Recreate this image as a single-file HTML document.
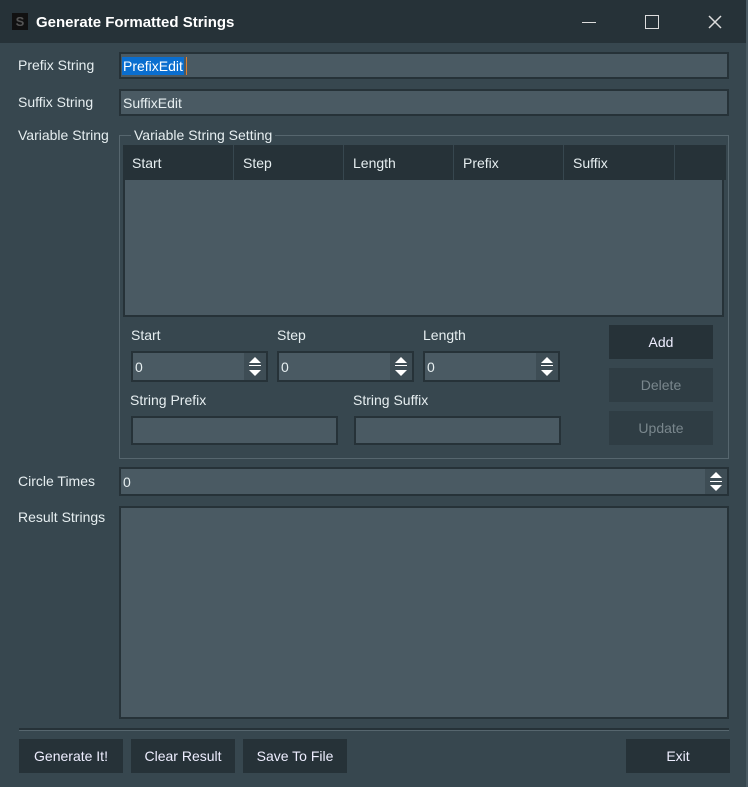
<!DOCTYPE html>
<html><head><meta charset="utf-8"><style>
*{box-sizing:border-box;margin:0;padding:0}
body{width:748px;height:787px;background:#37474f;font-family:"Liberation Sans","DejaVu Sans",sans-serif;font-size:14px;color:#e6eef0;position:relative;overflow:hidden}
.a{position:absolute}
.tb{left:0;top:0;width:748px;height:43px;background:#263238}
.in{position:absolute;background:#4a5a63;border:2px solid #263238;}
.lbl{position:absolute;line-height:16px;white-space:nowrap}
.btn{position:absolute;background:#263238;text-align:center;line-height:34px;color:#eef}
.dis{background:#2f3d44;color:#7a878d}
.sp{position:absolute;right:0;top:0;bottom:0;width:22px;background:#3e4d55}
.up{position:absolute;left:5px;top:4px;border-left:6px solid transparent;border-right:6px solid transparent;border-bottom:6px solid #fff}
.dn{position:absolute;left:5px;bottom:4px;border-left:6px solid transparent;border-right:6px solid transparent;border-top:6px solid #fff}
.ln{position:absolute;left:5px;width:12px;height:1px;background:#fff}
.th{position:absolute;top:0;height:35px;border-right:1px solid #37474f;line-height:37px;padding-left:9px}
</style></head><body>
<div class="a tb"></div>
<div class="a" style="left:12px;top:13px;width:16px;height:17px;background:#111;color:#555;font-size:13px;line-height:17px;text-align:center;font-weight:bold">S</div>
<div class="lbl" style="left:36px;top:15px;font-size:15px;font-weight:bold;color:#fff">Generate Formatted Strings</div>
<div class="a" style="left:582px;top:22px;width:14px;height:1px;background:#ddd"></div>
<div class="a" style="left:645px;top:15px;width:14px;height:14px;border:1.5px solid #ddd"></div>
<svg class="a" style="left:708px;top:15px" width="14" height="14"><path d="M1 1L13 13M13 1L1 13" stroke="#ddd" stroke-width="1.5"/></svg>
<div class="a" style="left:746px;top:0;width:2px;height:787px;background:#4a5a63"></div>

<div class="lbl" style="left:18px;top:57px">Prefix String</div>
<div class="in" style="left:119px;top:52px;width:610px;height:27px"><span style="position:absolute;left:1px;top:3px;background:#0a6ecf;color:#fff;line-height:18px;padding:0 1px">PrefixEdit</span><span style="position:absolute;left:65px;top:3px;width:1px;height:18px;background:#e08030"></span></div>
<div class="lbl" style="left:18px;top:94px">Suffix String</div>
<div class="in" style="left:119px;top:89px;width:610px;height:27px"><span style="position:absolute;left:2px;top:4px">SuffixEdit</span></div>
<div class="lbl" style="left:18px;top:127px">Variable String</div>

<div class="a" style="left:119px;top:135px;width:610px;height:324px;border:1px solid #56666e"></div>
<div class="lbl" style="left:131px;top:127px;background:#37474f;padding:0 3px">Variable String Setting</div>
<div class="a" style="left:123px;top:145px;width:601px;height:172px;background:#4a5a63;border:2px solid #263238;border-top:0">
<div class="a" style="left:-2px;top:0;width:603px;height:35px;background:#263238">
<div class="th" style="left:0;width:111px">Start</div>
<div class="th" style="left:111px;width:110px">Step</div>
<div class="th" style="left:221px;width:110px">Length</div>
<div class="th" style="left:331px;width:110px">Prefix</div>
<div class="th" style="left:441px;width:111px">Suffix</div>
</div></div>

<div class="lbl" style="left:131px;top:327px">Start</div>
<div class="lbl" style="left:277px;top:327px">Step</div>
<div class="lbl" style="left:423px;top:327px">Length</div>
<div class="in" style="left:131px;top:351px;width:137px;height:31px"><span style="position:absolute;left:2px;top:6px">0</span><div class="sp"><div class="up"></div><div class="ln" style="top:12px"></div><div class="dn"></div></div></div>
<div class="in" style="left:277px;top:351px;width:137px;height:31px"><span style="position:absolute;left:2px;top:6px">0</span><div class="sp"><div class="up"></div><div class="ln" style="top:12px"></div><div class="dn"></div></div></div>
<div class="in" style="left:423px;top:351px;width:137px;height:31px"><span style="position:absolute;left:2px;top:6px">0</span><div class="sp"><div class="up"></div><div class="ln" style="top:12px"></div><div class="dn"></div></div></div>
<div class="btn" style="left:609px;top:325px;width:104px;height:34px">Add</div>
<div class="btn dis" style="left:609px;top:368px;width:104px;height:34px">Delete</div>
<div class="btn dis" style="left:609px;top:411px;width:104px;height:34px">Update</div>
<div class="lbl" style="left:130px;top:392px">String Prefix</div>
<div class="lbl" style="left:353px;top:392px">String Suffix</div>
<div class="in" style="left:131px;top:416px;width:207px;height:29px"></div>
<div class="in" style="left:354px;top:416px;width:207px;height:29px"></div>

<div class="lbl" style="left:18px;top:473px">Circle Times</div>
<div class="in" style="left:119px;top:467px;width:610px;height:29px"><span style="position:absolute;left:2px;top:5px">0</span><div class="sp"><div class="up" style="top:3px"></div><div class="ln" style="top:12px"></div><div class="dn" style="bottom:3px"></div></div></div>
<div class="lbl" style="left:18px;top:509px">Result Strings</div>
<div class="in" style="left:119px;top:506px;width:610px;height:213px"></div>
<div class="a" style="left:19px;top:728px;width:710px;height:3px;background:#263238;border-bottom:1px solid #56666e"></div>

<div class="btn" style="left:19px;top:739px;width:104px;height:34px">Generate It!</div>
<div class="btn" style="left:131px;top:739px;width:104px;height:34px">Clear Result</div>
<div class="btn" style="left:243px;top:739px;width:104px;height:34px">Save To File</div>
<div class="btn" style="left:626px;top:739px;width:104px;height:34px">Exit</div>
</body></html>
